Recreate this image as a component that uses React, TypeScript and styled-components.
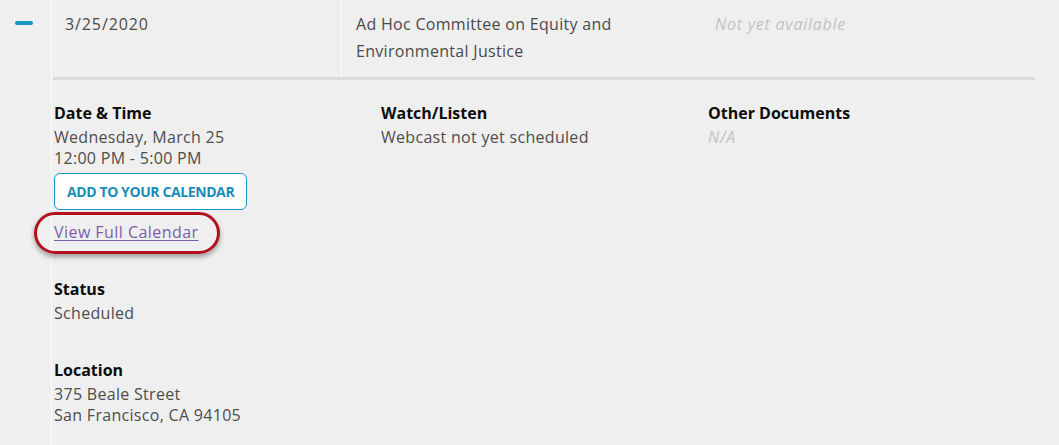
import React from "react";
import styled, { createGlobalStyle } from "styled-components";

const GlobalStyle = createGlobalStyle`
  html, body { margin: 0; padding: 0; }
  body {
    background: #efefef;
    font-family: "Open Sans", "Liberation Sans", sans-serif;
  }
`;

const Page = styled.div`
  min-height: 445px;
  background: #efefef;
  display: flex;
`;

const ToggleCell = styled.div`
  width: 52px;
  flex: none;
  border-right: 1px solid #fbfbfb;
  padding-top: 21px;
  box-sizing: border-box;
  display: flex;
  justify-content: center;
  align-items: flex-start;
  padding-right: 2px;
`;

const MinusBar = styled.span`
  display: block;
  width: 18px;
  height: 4px;
  border-radius: 2px;
  background: #1896c2;
  margin-right: 2px;
`;

const Content = styled.div`
  flex: 1;
  padding-left: 1px;
  padding-right: 24px;
`;

const Summary = styled.div`
  display: grid;
  grid-template-columns: 289px 359px 1fr;
  font-size: 16px;
  line-height: 27px;
  color: #4a4a4a;
  letter-spacing: 0.3px;
`;

const SummaryCell = styled.div<{ $divider?: boolean; $muted?: boolean }>`
  padding: 11px 14px 12px 14px;
  border-right: ${(p) => (p.$divider ? "1px solid #fbfbfb" : "none")};
  ${(p) =>
    p.$muted ? "color: #c3c3c3; font-style: italic; letter-spacing: 0.75px;" : ""}
`;

const DateCell = styled(SummaryCell)`
  padding-left: 12px;
  letter-spacing: 0.9px;
`;

const Rule = styled.div`
  height: 3px;
  background: #dcdcdc;
`;

const Details = styled.div`
  display: grid;
  grid-template-columns: 327px 327px 1fr;
  padding-top: 23px;
  padding-left: 1px;
`;

const Column = styled.div`
  display: flex;
  flex-direction: column;
  align-items: flex-start;
`;

const Section = styled.div`
  display: flex;
  flex-direction: column;
  align-items: flex-start;
  & + & {
    margin-top: 36.5px;
  }
`;

const Heading = styled.div`
  font-size: 16px;
  line-height: 20px;
  font-weight: 700;
  color: #0d0d0d;
  margin-bottom: 4px;
`;

const Value = styled.div<{ $muted?: boolean }>`
  font-size: 16px;
  line-height: 21px;
  letter-spacing: ${(p) => (p.$muted ? "0.75px" : "0.3px")};
  color: ${(p) => (p.$muted ? "#c3c3c3" : "#4d4d4d")};
  font-style: ${(p) => (p.$muted ? "italic" : "normal")};
`;

const CalendarButton = styled.button`
  margin-top: 4px;
  height: 37px;
  padding: 0 12px;
  background: #ffffff;
  border: 1px solid #1a97c6;
  border-radius: 6px;
  color: #1a8cb8;
  font-family: inherit;
  font-size: 14px;
  font-weight: 700;
  letter-spacing: -0.4px;
  cursor: pointer;
`;

const LinkWrap = styled.div`
  position: relative;
  margin-top: 12px;
`;

const CalendarLink = styled.a`
  display: block;
  font-size: 16px;
  line-height: 20px;
  letter-spacing: 0.45px;
  color: #7a5ea8;
  text-decoration: underline;
  text-underline-offset: 2px;
`;

const Highlight = styled.span`
  position: absolute;
  left: -20px;
  right: -21px;
  top: -10px;
  bottom: -12px;
  border: 3px solid #b3111c;
  border-radius: 22px;
  box-shadow: 0 3px 5px rgba(0, 0, 0, 0.35);
  pointer-events: none;
`;

export default function App() {
  return (
    <>
      <GlobalStyle />
      <Page>
        <ToggleCell>
          <MinusBar />
        </ToggleCell>
        <Content>
          <Summary>
            <DateCell $divider>3/25/2020</DateCell>
            <SummaryCell>
              Ad Hoc Committee on Equity and
              <br />
              Environmental Justice
            </SummaryCell>
            <SummaryCell $muted>Not yet available</SummaryCell>
          </Summary>
          <Rule />
          <Details>
            <Column>
              <Section>
                <Heading>Date &amp; Time</Heading>
                <Value>Wednesday, March 25</Value>
                <Value>12:00 PM - 5:00 PM</Value>
                <CalendarButton>ADD TO YOUR CALENDAR</CalendarButton>
                <LinkWrap>
                  <CalendarLink href="#">View Full Calendar</CalendarLink>
                  <Highlight />
                </LinkWrap>
              </Section>
              <Section>
                <Heading>Status</Heading>
                <Value>Scheduled</Value>
              </Section>
              <Section>
                <Heading>Location</Heading>
                <Value>375 Beale Street</Value>
                <Value>San Francisco, CA 94105</Value>
              </Section>
            </Column>
            <Column>
              <Section>
                <Heading>Watch/Listen</Heading>
                <Value>Webcast not yet scheduled</Value>
              </Section>
            </Column>
            <Column>
              <Section>
                <Heading>Other Documents</Heading>
                <Value $muted>N/A</Value>
              </Section>
            </Column>
          </Details>
        </Content>
      </Page>
    </>
  );
}
